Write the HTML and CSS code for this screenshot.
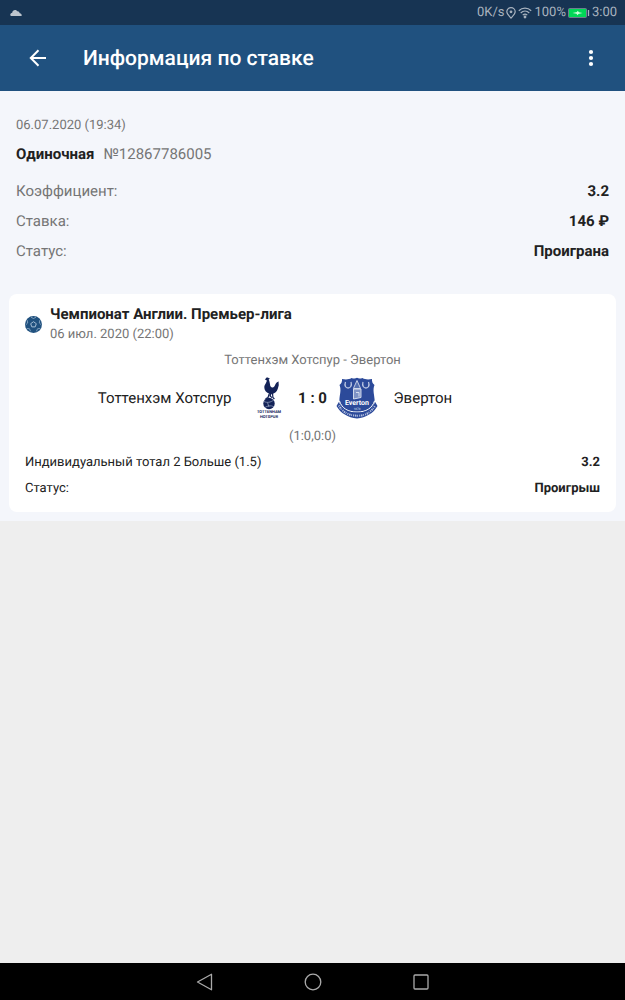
FILE: index.html
```html
<!DOCTYPE html>
<html lang="ru">
<head>
  <meta charset="UTF-8">
  <meta name="viewport" content="width=device-width, initial-scale=1">
  <title>Информация по ставке</title>
  <link rel="stylesheet" href="styles.css">
</head>
<body>
  <div class="status-bar">
    <svg class="cloud" width="12" height="8" viewBox="0 0 12 8"><path d="M1 7C-.5 6 .5 4 2.200 3.700 2.500.5 6 .1 7.300 2.200 9 2 9.500 3.500 9.800 4.300 11.500 4.600 12 6 11.500 7z"/></svg>
    <div class="indicators">
      <span>0K/s</span>
      <svg width="10" height="12" viewBox="0 0 10 12" fill="none" stroke="#a9b3bf" stroke-width="1.200"><path d="M5 11C3 8.800.8 7 .8 4.800a4.200 4.200 0 0 1 8.400 0C9.200 7 7 8.800 5 11z"/><circle cx="5" cy="4.800" r=".8" fill="#a9b3bf"/></svg>
      <svg width="14" height="12" viewBox="0 0 14 12" fill="none" stroke="#a9b3bf" stroke-width="1.200"><path d="M.8 3.700c3.500-3.400 8.900-3.400 12.400 0M2.700 6c2.500-2.400 6.100-2.400 8.600 0M4.700 8.100c1.300-1.200 3.300-1.200 4.600 0"/><circle cx="7" cy="10" r=".8" fill="#a9b3bf"/></svg>
      <span>100%</span>
      <svg width="22" height="10" viewBox="0 0 22 10"><rect x=".5" y=".5" width="18" height="9" rx="1" fill="#00d757" stroke="#6d7f8f"/><path d="M4.500 5 9 4l.7-1.300L11 4.200 14.500 5 10.500 6 9.500 7.300 8.500 5.800z" fill="#c9ffd9"/><path d="M20.500 2v6" stroke="#a9b3bf" stroke-width="1.300"/></svg>
      <span>3:00</span>
    </div>
  </div>

  <header class="app-bar">
    <button class="icon-btn" aria-label="Назад">
      <svg width="18" height="18" viewBox="0 0 18 18" fill="none" stroke="#fff" stroke-width="2"><path d="M17 9H2M9.500 1.300 1.800 9l7.700 7.700"/></svg>
    </button>
    <h1>Информация по ставке</h1>
    <button class="icon-btn" aria-label="Меню">
      <svg width="6" height="18" viewBox="0 0 6 18" fill="#fff"><circle cx="3" cy="3" r="2.100"/><circle cx="3" cy="9" r="2.100"/><circle cx="3" cy="15" r="2.100"/></svg>
    </button>
  </header>

  <main class="bet">
    <section class="summary">
      <div class="bet-date">06.07.2020 (19:34)</div>
      <div class="bet-type"><b>Одиночная</b><span>№12867786005</span></div>
      <dl class="rows">
        <div class="row"><dt>Коэффициент:</dt><dd>3.2</dd></div>
        <div class="row"><dt>Ставка:</dt><dd>146 ₽</dd></div>
        <div class="row"><dt>Статус:</dt><dd>Проиграна</dd></div>
      </dl>
    </section>

    <section class="card">
      <div class="event-head">
        <svg width="17" height="17" viewBox="0 0 17 17" fill="none" stroke="#a5bdd4"><circle cx="8.500" cy="8.500" r="8.500" fill="#20517f" stroke="none"/><path d="m8.500 5.700 2.800 2-1.100 3.200H6.800L5.700 7.700z" stroke-width="1"/><path d="M6 1.200 8.500 2.500 11 1.200M14.800 4.200 14.300 7l2.100 2M15.300 12.500l-2.700.2-1.200 2.600M5.600 15.300l-1.200-2.600-2.700-.2M.6 9l2.100-2-.5-2.800" stroke-width=".7"/></svg>
        <div>
          <h2>Чемпионат Англии. Премьер-лига</h2>
          <div class="event-date">06 июл. 2020 (22:00)</div>
        </div>
      </div>
      <div class="teams">Тоттенхэм Хотспур - Эвертон</div>
      <div class="match">
        <span class="team home">Тоттенхэм Хотспур</span>
        <svg width="42" height="42" viewBox="0 0 42 42" fill="#132257">
          <path d="M17.500 2.300c0-1.500 1.200-2 2.300-1.800L22 1.700l-1.300.8c1 2 1.200 4.400 1.600 6.400 1.900 2.500 4 1.500 4.700-.6.600-2 1.900-3.600 3.800-3.800-.6 1.400.2 2.500-.1 4.100l-1 3.500c-.9 3-3.200 4.700-6.200 4.900l-.7 1.800 1.700 1.700-1 .6-2.300-2 .6-2.500c-3.700-1-5.600-3.500-5.500-6.400.1-3 2.600-4.300 2.400-7l-1.900-.4z"/>
          <path d="m21.500 16-1.500 4.500-2.500 1.300M24.500 16l.4 4.500 1.500 1.500" fill="none" stroke="#132257" stroke-width="1.200"/>
          <circle cx="21" cy="26.500" r="5.700"/>
          <path d="M16 24.500c3 1.500 6.700 1 9.700-1.500M17 30.500c2.500-1.900 5.600-2.300 9-.8M19.500 25.500l1.500 4.500" fill="none" stroke="#9daac5" stroke-width=".7"/>
          <text class="crest-text" x="21" y="36" text-anchor="middle">TOTTENHAM</text>
          <text class="crest-text" x="21" y="41" text-anchor="middle">HOTSPUR</text>
        </svg>
        <span class="score">1 : 0</span>
        <svg width="42" height="42" viewBox="0 0 42 42" fill="#2c4a9a">
          <path d="M6 2c4 .8 7 .5 9.500-1 2.200.8 3.800.9 5.500-.2 1.700 1.100 3.300 1 5.500.2C29 2.500 32 2.800 36 2c-.2 2.500.5 4.500 2.500 6-2 5-.3 9 .1 14.500C39 31 31 37 21 41 11 37 3 31 3.400 22.500 3.800 17 5.500 13 3.500 8 5.500 6.500 6.200 4.500 6 2z"/>
          <path d="M9.500 5c-3 8 8 8 5.500 0M27 5c-2.500 8 8.500 8 5.500 0" fill="none" stroke="#bdc8e3" stroke-width="1.300"/>
          <path d="m21 3.500-3.600 8h7.200z" fill="#5570b0" stroke="#e4e9f4" stroke-width=".8"/>
          <path d="M17.500 12h7.500v8.500l-7.500 1.500zM20 15.500h3v4" fill="#7f93c5" stroke="#dfe5f2" stroke-width=".9"/>
          <path d="M3.500 24c2.500 7.500 8.500 11 17.500 11s15-3.500 17.500-11" fill="none" stroke="#fff" stroke-width="1"/>
          <path d="M2.800 25 .5 29c4 7.300 11.500 11.500 20.500 12.500C30 40.500 37.500 36.300 41.500 29l-2.300-4C36 32.500 30 35.600 21 35.600S6 32.500 2.800 25z"/>
          <path d="M2.800 28.500C7 35.500 13 38.500 21 38.700s14-3.200 18.200-10.200" fill="none" stroke="#b5c1df" stroke-width="2" stroke-dasharray="1 .8 1.500 .7 .8 1.200"/>
          <text class="crest-name" x="21" y="28" text-anchor="middle">Everton</text>
          <text class="crest-year" x="21" y="33" text-anchor="middle">1878</text>
        </svg>
        <span class="team">Эвертон</span>
      </div>
      <div class="periods">(1:0,0:0)</div>
      <dl class="rows">
        <div class="row"><dt>Индивидуальный тотал 2 Больше (1.5)</dt><dd>3.2</dd></div>
        <div class="row"><dt>Статус:</dt><dd>Проигрыш</dd></div>
      </dl>
    </section>
  </main>

  <nav class="system-nav">
    <button class="icon-btn" aria-label="Назад">
      <svg width="18" height="18" viewBox="0 0 18 18" fill="none" stroke="#aaa" stroke-width="1.300" stroke-linejoin="round"><path d="M15.500 1.200v15.600L1.500 9z"/></svg>
    </button>
    <button class="icon-btn" aria-label="Домой">
      <svg width="18" height="18" viewBox="0 0 18 18" fill="none" stroke="#aaa" stroke-width="1.300"><circle cx="9" cy="9" r="7.800"/></svg>
    </button>
    <button class="icon-btn" aria-label="Недавние">
      <svg width="18" height="18" viewBox="0 0 18 18" fill="none" stroke="#aaa" stroke-width="1.300"><rect x="2" y="2" width="14" height="14" rx="1"/></svg>
    </button>
  </nav>
</body>
</html>
```
FILE: styles.css
```css
* {
  box-sizing: border-box;
}
body {
  display: flex;
  flex-direction: column;
  min-height: 100vh;
  margin: 0;
  background: #eee;
  color: #212121;
  font-family: Roboto, sans-serif;
  font-size: 13px;
  line-height: 20px;
  text-rendering: geometricPrecision;
}
svg {
  display: block;
  flex: none;
}
h1, h2, dl, dd {
  margin: 0;
}
.status-bar {
  display: flex;
  align-items: center;
  justify-content: space-between;
  height: 25px;
  padding: 1px 8px 0 10px;
  background: #173453;
  color: #a9b3bf;
}
.cloud {
  fill: #bcc4cd;
}
.indicators {
  display: flex;
  align-items: center;
  gap: 2px;
}
.app-bar {
  display: flex;
  align-items: center;
  height: 66px;
  padding: 0 16px 0 20px;
  background: #20517f;
  color: #fff;
}
.app-bar h1 {
  flex: 1;
  padding: 2px 0 0 27px;
  font-size: 21px;
  font-weight: 500;
  line-height: 28px;
}
.icon-btn {
  display: flex;
  align-items: center;
  justify-content: center;
  min-width: 36px;
  height: 36px;
  padding: 0;
  border: none;
  background: none;
  cursor: pointer;
}
.bet {
  padding: 25px 9px 9px;
  background: #f4f6fb;
}
.summary {
  padding: 0 7px;
  color: #757575;
  font-size: 15px;
}
.summary .bet-date {
  font-size: 13px;
}
.bet-type {
  display: flex;
  gap: 9px;
  margin: 8px 0 12px;
}
.bet-type b, .row dd {
  color: #212121;
  font-weight: 700;
}
.row {
  display: flex;
  justify-content: space-between;
  line-height: 30px;
}
.card {
  margin-top: 28px;
  padding: 10px 16px;
  border-radius: 8px;
  background: #fff;
}
.event-head {
  display: flex;
  align-items: center;
  gap: 8px;
}
.event-head h2 {
  margin-bottom: 1px;
  font-size: 15px;
  font-weight: 700;
  line-height: 20px;
}
.event-date, .teams, .periods {
  color: #757575;
}
.teams, .periods {
  text-align: center;
}
.teams {
  margin: 6px 0;
}
.match {
  display: grid;
  grid-template-columns: 1fr auto 46px auto 1fr;
  align-items: center;
  font-size: 15px;
}
.team {
  padding: 0 16px;
}
.home {
  text-align: right;
}
.score {
  font-weight: 700;
  text-align: center;
}
.periods {
  margin: 8px 0 3px;
}
.card .row {
  line-height: 26px;
}
.crest-text {
  font-size: 4px;
  font-weight: 700;
}
.crest-name {
  fill: #fff;
  font-size: 7px;
  font-weight: 700;
}
.crest-year {
  fill: #dfe5f2;
  font-size: 3px;
}
.system-nav {
  display: flex;
  align-items: center;
  justify-content: center;
  gap: 72px;
  height: 37px;
  margin-top: auto;
  background: #000;
}
```
